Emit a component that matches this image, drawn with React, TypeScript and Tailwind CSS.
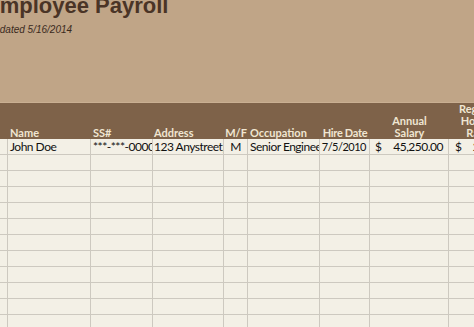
const cols = [
  "w-[8px]",
  "w-[83px]",
  "w-[62px]",
  "w-[71px]",
  "w-[24px]",
  "w-[72px]",
  "w-[50px]",
  "w-[79px]",
  "w-[57px]",
];

const emptyRows = Array.from({ length: 12 });

export default function App() {
  return (
    <div className="w-[474px] h-[327px] overflow-hidden bg-[#f3f0e6] font-['Lato',sans-serif]">
      {/* Title banner */}
      <div className="h-[103px] bg-[#c0a587] border-b border-[#c9af92] overflow-hidden">
        <div className="mt-[-5px] ml-[-15px] text-[22px] leading-[22px] font-bold text-[#4a3426] font-['Liberation_Sans',Arial,sans-serif] whitespace-nowrap">
          Employee Payroll
        </div>
        <div className="mt-[7px] ml-[-13px] text-[10px] leading-[12px] italic text-[#3b2a1e] font-['Liberation_Sans',Arial,sans-serif] whitespace-nowrap">
          Updated 5/16/2014
        </div>
      </div>

      {/* Column headers */}
      <div className="flex h-[36px] bg-[#7e6249] text-[#f0e6d2] text-[11px] leading-[12px] font-bold whitespace-nowrap">
        <div className={`${cols[0]} shrink-0`} />
        <div className={`${cols[1]} shrink-0 flex items-end pl-[2px]`}>Name</div>
        <div className={`${cols[2]} shrink-0 flex items-end pl-[2px]`}>SS#</div>
        <div className={`${cols[3]} shrink-0 flex items-end pl-[1px]`}>Address</div>
        <div className={`${cols[4]} shrink-0 flex items-end justify-center`}>M/F</div>
        <div className={`${cols[5]} shrink-0 flex items-end pl-[2px]`}>Occupation</div>
        <div className={`${cols[6]} shrink-0 flex items-end justify-center tracking-[-0.3px]`}>Hire Date</div>
        <div className={`${cols[7]} shrink-0 flex flex-col items-center justify-end`}>
          <span>Annual</span>
          <span>Salary</span>
        </div>
        <div className={`${cols[8]} shrink-0 flex flex-col items-center justify-end`}>
          <span>Regular</span>
          <span>Hourly</span>
          <span>Rate</span>
        </div>
      </div>

      {/* Data rows */}
      <div className="text-[12px] leading-[16px] tracking-[-0.5px] text-[#111] whitespace-nowrap">
        <div className="flex h-[16px]">
          <div className={`${cols[0]} shrink-0 border-r border-b border-[#cdc9c0]`} />
          <div className={`${cols[1]} shrink-0 border-r border-b border-[#cdc9c0] pl-[2px] overflow-hidden`}>John Doe</div>
          <div className={`${cols[2]} shrink-0 border-r border-b border-[#cdc9c0] pl-[2px] overflow-hidden`}>***-***-0000</div>
          <div className={`${cols[3]} shrink-0 border-r border-b border-[#cdc9c0] pl-[1px] overflow-hidden`}>123 Anystreet, Anytown</div>
          <div className={`${cols[4]} shrink-0 border-r border-b border-[#cdc9c0] text-center overflow-hidden`}>M</div>
          <div className={`${cols[5]} shrink-0 border-r border-b border-[#cdc9c0] pl-[2px] overflow-hidden`}>Senior Engineer</div>
          <div className={`${cols[6]} shrink-0 border-r border-b border-[#cdc9c0] text-right pr-[3px] text-[11px] overflow-hidden`}>7/5/2010</div>
          <div className={`${cols[7]} shrink-0 border-r border-b border-[#cdc9c0] flex justify-between pl-[5px] pr-[5px] overflow-hidden`}>
            <span>$</span>
            <span>45,250.00</span>
          </div>
          <div className={`${cols[8]} shrink-0 border-b border-[#cdc9c0] flex justify-between pl-[6px] pr-[5px] overflow-hidden`}>
            <span>$</span>
            <span>21.76</span>
          </div>
        </div>
        {emptyRows.map((_, i) => (
          <div key={i} className="flex h-[16px]">
            {cols.map((w, j) => (
              <div
                key={j}
                className={`${w} shrink-0 border-b border-[#cdc9c0] ${j < cols.length - 1 ? "border-r" : ""}`}
              />
            ))}
          </div>
        ))}
      </div>
    </div>
  );
}
